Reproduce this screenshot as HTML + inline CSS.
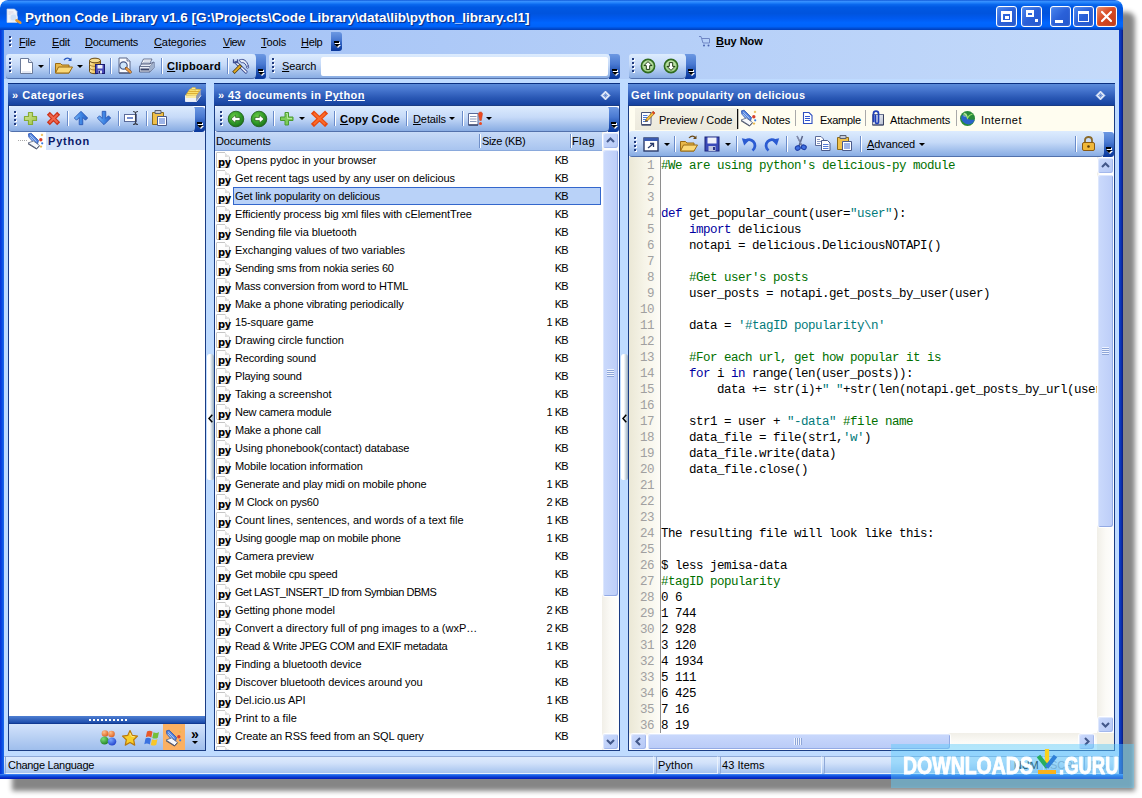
<!DOCTYPE html>
<html lang="en"><head><meta charset="utf-8"><title>Python Code Library v1.6</title>
<style>
html,body{margin:0;padding:0;background:#fff}
body{width:1142px;height:798px;position:relative;overflow:hidden;font:11px "Liberation Sans",sans-serif;letter-spacing:-0.1px;color:#000}
div,span{box-sizing:border-box}
.a{position:absolute}
u{text-decoration:underline;text-underline-offset:1px}
#win{position:absolute;left:0;top:0;width:1123px;height:779px;background:#bfdbff;border-radius:8px 8px 0 0;box-shadow:12px 12px 5px 0 rgba(0,0,0,.48);overflow:hidden}
#title{position:absolute;left:0;top:0;width:1123px;height:30px;border-radius:8px 8px 0 0;
 background:linear-gradient(#0950d2 0%,#3b92ff 4%,#2383fb 9%,#0a68ee 15%,#0058e2 24%,#0054de 45%,#005af0 62%,#0066ff 76%,#0063fa 88%,#0050d8 94%,#003db8 100%)}
#title .tt{position:absolute;left:25px;top:10px;font:bold 13.5px "Liberation Sans",sans-serif;letter-spacing:0;color:#fff;text-shadow:1px 1px 1px #0a2a80;white-space:nowrap}
.cb{position:absolute;top:6px;width:21px;height:21px;border:1px solid #fff;border-radius:3px;background:linear-gradient(135deg,#4a86ee 0%,#2a60d8 50%,#2458cc 100%);box-shadow:inset 0 0 2px rgba(255,255,255,.3)}
.cb.x{background:linear-gradient(135deg,#e88a6a 0%,#d84a22 45%,#c03a18 100%)}
#lb,#rb,#bb{position:absolute;background:#0a48d8}
#lb{left:0;top:30px;width:4px;height:749px;background:linear-gradient(90deg,#0831d9,#0a4ce0 50%,#1a6af0)}
#rb{left:1119px;top:30px;width:4px;height:749px;background:linear-gradient(90deg,#0a3cc8,#0a34b8 50%,#081a80)}
#bb{left:0;top:774px;width:1123px;height:5px;background:linear-gradient(#4a90f8 0,#1a60e8 25%,#0a3cd0 60%,#0019b8 100%)}
#menubar{position:absolute;left:4px;top:30px;width:1115px;height:49px;background:linear-gradient(90deg,#9ebef5,#c4dafa)}
.mi{position:absolute;top:36px;white-space:nowrap;letter-spacing:-.3px}
.grip{position:absolute;width:3px;background:repeating-linear-gradient(#223c80 0,#223c80 2px,transparent 2px,transparent 4px) 0 0/2px 100% no-repeat,repeating-linear-gradient(#fff 0,#fff 2px,transparent 2px,transparent 4px) 1px 1px/2px 100% no-repeat}
.tb{position:absolute;height:25px;border-radius:3px 4px 4px 3px;z-index:0}
.tb:before{content:"";position:absolute;left:0;top:0;right:10px;bottom:0;border-radius:3px 4px 4px 3px;background:linear-gradient(#ddecfe 0%,#c6daf8 45%,#88ace3 100%);border-bottom:1px solid #5271ac;z-index:1}
.cap{position:absolute;top:0;right:0;width:11px;height:100%;border-radius:0 3px 3px 0;background:linear-gradient(#6c98e2 0%,#4a7ad2 40%,#1c4eb0 75%,#08369a 100%)}
.cap:before{content:"";position:absolute;left:3px;bottom:8px;width:5px;height:2px;background:#000;box-shadow:1px 1px 0 #fff}
.cap:after{content:"";position:absolute;left:3px;bottom:4px;border:3px solid transparent;border-top:3px solid #000;border-bottom:0;width:0;height:0;filter:drop-shadow(1px 1px 0 #fff)}
.sep{position:absolute;width:2px;background:linear-gradient(90deg,#6a8ccb 0,#6a8ccb 1px,#fff 1px,#fff 2px)}
.dd{position:absolute;width:0;height:0;border:3px solid transparent;border-top:3px solid #000;border-bottom:0}
.ph{position:absolute;height:23px;border-top:1px solid #0a2f80;border-bottom:1px solid #0a2f80;background:linear-gradient(#5b8bd9 0%,#4574cd 30%,#2a58b5 65%,#15429f 100%);color:#fff;font:bold 11px "Liberation Sans",sans-serif;letter-spacing:.38px;white-space:nowrap}
.ph span.t{position:absolute;left:3px;top:5px}
.ph u{text-underline-offset:1px}
.pane{position:absolute;background:#fff;border:1px solid #1a3c84}
.row{position:absolute;left:0;width:387px;height:18px;line-height:18px;white-space:nowrap}
.row .py{position:absolute;left:1px;top:1px;width:14px;height:16px;padding-left:1px;font:bold 11px "DejaVu Sans Condensed","Liberation Sans",sans-serif;letter-spacing:-.4px;line-height:19px;text-indent:0;color:#000;background:linear-gradient(135deg,#fff 0,#fdfdfd 60%,#e8e8e8 100%);border:1px solid #c6c6c6;border-radius:1px;overflow:visible;white-space:nowrap}
.row .py:before{content:"";position:absolute;right:-1px;top:-1px;width:5px;height:5px;background:linear-gradient(45deg,#d8d8d8 0,#e8e8e8 50%,#fff 50%,#fff 100%)}
.row .t{position:absolute;left:20px;top:0}
.row .kb{position:absolute;right:34px;top:0;letter-spacing:-.7px;word-spacing:.5px}
.row.sel .t{left:18px;width:368px;padding-left:1px;height:18px;line-height:16px;background:#b9d2f8;border:1px solid #3467cc}
.row.sel .kb{z-index:2}
.hd{position:absolute;top:0;height:19px;line-height:18px;padding-left:3px;background:linear-gradient(#c8dbf8,#a8c4ef);border-bottom:1px solid #8aa9dc}
.hd:after{content:"";position:absolute;right:0;top:2px;width:2px;height:14px;background:linear-gradient(90deg,#6f8fc8 0,#6f8fc8 1px,#fff 1px,#fff 2px)}
.hd.nf:after{display:none}
.sbv{position:absolute;width:17px;background:linear-gradient(90deg,#f1efe8,#fbfaf6 50%,#fefefd)}
.sbtn{position:absolute;left:0;width:17px;height:17px;border:1px solid #fff;border-radius:3px;background:linear-gradient(135deg,#cbdafc,#b6c9f6);box-shadow:inset -1px -1px 0 #a3b8ec,inset 1px 1px 0 #dfe8fd}
.thumb{position:absolute;border:1px solid #fff;border-radius:3px;background:linear-gradient(90deg,#cbdafc,#bccdf8);box-shadow:inset -1px -1px 0 #93aae4,inset 1px 1px 0 #dde7fd}
.code,.ln{font:12.5px "Liberation Mono",monospace;letter-spacing:-.5px;white-space:pre}
.code div,.ln div{height:16px;line-height:16px}
.ln{color:#a0a0a0;text-align:right}
.c{color:#007000}.k{color:#0000a0}.s{color:#007a7a}
.tab{position:absolute;top:0;height:24px;line-height:24px;white-space:nowrap}
.sp{position:absolute;top:756px;height:18px;border:1px solid #8fa9d8;border-right-color:#eaf2fd;border-bottom-color:#eaf2fd;line-height:16px;padding-left:3px;white-space:nowrap;letter-spacing:-.2px}
.wm{font:bold 24px "Liberation Sans",sans-serif;letter-spacing:0;color:#fff;-webkit-text-stroke:.9px #fff;transform-origin:0 0;white-space:nowrap;line-height:24px}
</style></head>
<body>
<div id="win">
<div id="title">
 <svg class="a" style="left:5px;top:7px" width="18" height="18" viewBox="0 0 18 18"><path d="M2 2h7.500l2.500 2.500v11h-10z" fill="#f2f5fb" stroke="#c4cde2" stroke-width=".7"/><path d="M3.500 5h5M3.500 7h6" stroke="#d6c8d8" stroke-width=".8"/><circle cx="8.500" cy="10.500" r="3.600" fill="#cfe0f6" stroke="#e9eef8" stroke-width="1.300"/><path d="M11.500 13.300l3.800 2.400" stroke="#e89a32" stroke-width="2.600" stroke-linecap="round"/></svg>
 <span class="tt">Python Code Library v1.6 [G:\Projects\Code Library\data\lib\python_library.cl1]</span>
 <div class="cb" style="left:996px"><div class="a" style="left:4px;top:4px;width:11px;height:11px;border:2px solid #fff;border-top-width:3px"></div><div class="a" style="left:8px;top:9px;width:4px;height:3px;background:#fff"></div></div>
 <div class="cb" style="left:1021px"><div class="a" style="left:4px;top:3px;width:8px;height:7px;border:2px solid #fff;border-top-width:3px"></div><div class="a" style="left:13px;top:12px;width:3px;height:3px;background:#fff"></div></div>
 <div class="cb" style="left:1050px"><div class="a" style="left:4px;top:13px;width:8px;height:3px;background:#fff"></div></div>
 <div class="cb" style="left:1073px"><div class="a" style="left:4px;top:4px;width:11px;height:11px;border:1px solid #fff;border-top-width:3px"></div></div>
 <div class="cb x" style="left:1096px"><svg class="a" style="left:3px;top:3px" width="13" height="13" viewBox="0 0 13 13"><path d="M2 2l9 9M11 2l-9 9" stroke="#fff" stroke-width="2.2" stroke-linecap="round"/></svg></div>
</div>
<div id="lb"></div><div id="rb"></div><div id="bb"></div>
<div id="menubar"></div>
<div class="grip" style="left:9px;top:36px;height:11px"></div>
<span class="mi" style="left:19px"><u>F</u>ile</span>
<span class="mi" style="left:52px"><u>E</u>dit</span>
<span class="mi" style="left:85px"><u>D</u>ocuments</span>
<span class="mi" style="left:154px;letter-spacing:-.1px"><u>C</u>ategories</span>
<span class="mi" style="left:223px;letter-spacing:-.5px"><u>V</u>iew</span>
<span class="mi" style="left:261px;letter-spacing:-.1px"><u>T</u>ools</span>
<span class="mi" style="left:301px"><u>H</u>elp</span>
<div class="a" style="left:331px;top:32px;width:11px;height:19px"><div class="cap"></div></div>
<svg class="a" style="left:698px;top:35px" width="14" height="13" viewBox="0 0 14 13"><path d="M1 1.5h2l2 6.500h6.500v-4.500h-7.500" fill="none" stroke="#6f86c4" stroke-width="1"/><circle cx="6" cy="10.5" r="1" fill="#4a64b0"/><circle cx="10.5" cy="10.5" r="1" fill="#4a64b0"/></svg>
<span class="mi" style="left:716px;top:35px;font-weight:bold;letter-spacing:-.05px"><u>B</u>uy Now</span>

<!-- toolbar row -->
<div class="tb" style="left:6px;top:54px;width:260px"><div class="cap"></div></div>
<div class="grip" style="left:9px;top:58px;height:15px"></div>
<svg class="a" style="left:19px;top:57px" width="16" height="18" viewBox="0 0 16 18"><path d="M1.5 1.5h8l4 4v11h-12z" fill="#fff" stroke="#6b7a99"/><path d="M9.5 1.5v4h4" fill="#dfe6f3" stroke="#6b7a99"/><path d="M3 14h9v2H3z" fill="#e4e9f4"/></svg>
<div class="dd" style="left:38px;top:65px"></div>
<div class="sep" style="left:49px;top:58px;height:16px"></div>
<svg class="a" style="left:54px;top:56px" width="20" height="19" viewBox="0 0 20 19"><path d="M1.5 7.5h5l1.5 1.5h7v8h-13.500z" fill="#e8b84a" stroke="#9a6a12"/><path d="M1.5 17l3-6h14l-3.500 6z" fill="#fbd978" stroke="#9a6a12"/><path d="M10 4c2-2.500 5-2.500 6.500 0" fill="none" stroke="#2a5ac0" stroke-width="1.400"/><path d="M17.500 1.500v3.500h-3.500z" fill="#2a5ac0"/></svg>
<div class="dd" style="left:77px;top:65px"></div>
<svg class="a" style="left:88px;top:57px" width="18" height="18" viewBox="0 0 18 18"><defs><linearGradient id="dbg" x1="0" y1="0" x2="1" y2="0"><stop offset="0" stop-color="#fbe7a8"/><stop offset=".5" stop-color="#eec25a"/><stop offset="1" stop-color="#b8862a"/></linearGradient></defs><path d="M1.500 3.500v11c0 1.300 2.500 2.200 5.500 2.200s5.500-.9 5.500-2.200v-11" fill="url(#dbg)" stroke="#6a4a12" stroke-width="1"/><ellipse cx="7" cy="3.500" rx="5.500" ry="2.300" fill="#f7dc8c" stroke="#6a4a12" stroke-width="1"/><path d="M1.500 7.200c0 1.300 2.500 2.200 5.500 2.200M1.500 10.800c0 1.300 2.500 2.200 5.500 2.200" fill="none" stroke="#9a7020" stroke-width=".8"/><rect x="7.500" y="7.500" width="9" height="9" fill="#4a4ab8" stroke="#1c1c70"/><rect x="9.500" y="8" width="5" height="3.500" fill="#eef0fa"/><rect x="10" y="13.500" width="4" height="3" fill="#e0e4f4"/><rect x="10.500" y="14" width="1.500" height="2.500" fill="#1c1c70"/></svg>
<div class="sep" style="left:110px;top:58px;height:16px"></div>
<svg class="a" style="left:117px;top:56px" width="18" height="19" viewBox="0 0 18 19"><path d="M2 2h8l3 3v12h-11z" fill="#fbfcff" stroke="#5a6688" stroke-width="1"/><path d="M10 2v3h3" fill="#d8deec" stroke="#5a6688" stroke-width=".8"/><path d="M2 16.500h11v1h-11z" fill="#3a4468"/><circle cx="6.500" cy="9.500" r="3.700" fill="#cfe6fb" stroke="#4a5a88" stroke-width="1.200"/><path d="M9.300 12.300l4 3.700" stroke="#7a4a1a" stroke-width="3" stroke-linecap="round"/><path d="M9.500 12.500l3.800 3.500" stroke="#f0a04a" stroke-width="1.700" stroke-linecap="round"/></svg>
<svg class="a" style="left:138px;top:57px" width="18" height="18" viewBox="0 0 18 18"><path d="M5.500 2h8.500l-2.500 5h-8.500z" fill="#fff" stroke="#5a6688" stroke-width=".9" stroke-linejoin="round"/><path d="M6 4h6.500M5 5.500h6.500" stroke="#aab4cc" stroke-width=".8"/><path d="M1.500 9.500l2-2.500h8l4.500-2v5.500l-4 4.500h-10.500z" fill="#e9edf6" stroke="#4a5678" stroke-width=".9" stroke-linejoin="round"/><path d="M1.500 9.500h10.500l4-4.500M12 9.500v5.500" fill="none" stroke="#4a5678" stroke-width=".8"/><path d="M2.500 11.500h8.500v2h-8.500z" fill="#3a4468"/><path d="M12 9.500l4-4.500v5.500l-4 4.500z" fill="#9fb0cc"/></svg>
<div class="sep" style="left:161px;top:58px;height:16px"></div>
<span class="a" style="left:167px;top:60px;font-weight:bold;letter-spacing:.3px"><u>C</u>lipboard</span>
<div class="sep" style="left:227px;top:58px;height:16px"></div>
<svg class="a" style="left:231px;top:56px" width="20" height="19" viewBox="0 0 20 19"><path d="M5 6.500l10 9.500" stroke="#3f4f92" stroke-width="3.200" stroke-linecap="round"/><path d="M5 6.500l10 9.500" stroke="#f4f7fd" stroke-width="1.500" stroke-linecap="round"/><path d="M2.500 3.200v3.300h4v-3.300" fill="none" stroke="#3f4f92" stroke-width="1.300"/><path d="M3.600 15.600l5.200-5.200" stroke="#4a3a12" stroke-width="3.400" stroke-linecap="square"/><path d="M3.600 15.600l5.200-5.200" stroke="#e2aa22" stroke-width="2" stroke-linecap="square"/><path d="M8 4.200c3.500-1.800 7-.6 8.800 4.200l.8 1.800-1.600.8-1-1.600c-1-2.200-2.600-3.200-4.600-2.600z" fill="#e6ebf7" stroke="#3f4f92" stroke-width="1" stroke-linejoin="round"/><circle cx="16.600" cy="11.200" r="1.100" fill="#dfe6f5" stroke="#3f4f92" stroke-width=".9"/></svg>

<div class="tb" style="left:269px;top:54px;width:351px"><div class="cap"></div></div>
<div class="grip" style="left:272px;top:58px;height:15px"></div>
<span class="a" style="left:282px;top:60px"><u>S</u>earch</span>
<div class="a" style="left:321px;top:57px;width:287px;height:19px;background:#fff;border-radius:2px"></div>

<div class="tb" style="left:629px;top:54px;width:67px"><div class="cap"></div></div>
<div class="grip" style="left:632px;top:58px;height:15px"></div>
<svg class="a" style="left:640px;top:58px" width="16" height="16" viewBox="0 0 16 16"><circle cx="8" cy="8" r="6.600" fill="#a4d48a" stroke="#2f6a1e" stroke-width="1.600"/><circle cx="8" cy="7.200" r="4.600" fill="#c4e6b0" opacity=".7"/><path d="M8 3.600l4 4h-2.300v3.800h-3.400v-3.800h-2.300z" fill="#fff" stroke="#1c3a10" stroke-width="1" stroke-linejoin="round"/></svg>
<svg class="a" style="left:663px;top:58px" width="16" height="16" viewBox="0 0 16 16"><circle cx="8" cy="8" r="6.600" fill="#a4d48a" stroke="#2f6a1e" stroke-width="1.600"/><circle cx="8" cy="7.200" r="4.600" fill="#c4e6b0" opacity=".7"/><path d="M8 12.400l4-4h-2.300v-3.800h-3.400v3.800h-2.300z" fill="#fff" stroke="#1c3a10" stroke-width="1" stroke-linejoin="round"/></svg>

<!-- LEFT PANEL -->
<div class="ph" style="left:8px;top:83px;width:198px"><span class="t" style="left:4px;letter-spacing:.52px">» Categories</span>
 <svg class="a" style="left:176px;top:2px" width="18" height="18" viewBox="0 0 18 18"><path d="M1.500 9.500l4.500-6.500 11 .5-4.500 6.500z" fill="#f9df6e" stroke="#d8b23a" stroke-width=".7"/><path d="M3 7.500h11M4.500 5.500h11" stroke="#d9a92e" stroke-width=".9"/><path d="M7 3l1.200-1.500h3l.5 1.600M11 4.800l1-1.300h2.500l.4 1.300" fill="#fbe88e" stroke="#d8b23a" stroke-width=".6"/><path d="M1.500 9.500h11v3h-11z" fill="#fbe9a0"/><path d="M1.500 12h11v3.500h-11z" fill="#eef1f7"/><path d="M12.500 9.500l4.500-6v6l-4.500 6z" fill="#8e98b4"/><path d="M1.500 9.500v6h11M12.500 15.500l4.500-6" fill="none" stroke="#fff" stroke-width=".8"/></svg></div>
<div class="pane" style="left:8px;top:105px;width:198px;height:646px"></div>
<div class="tb" style="left:9px;top:106px;width:196px;height:26px;border-radius:0 4px 4px 0"><div class="cap" style="top:1px;height:25px"></div></div>
<div class="grip" style="left:14px;top:111px;height:15px"></div>
<svg class="a" style="left:23px;top:111px" width="15" height="15" viewBox="0 0 15 15"><defs><linearGradient id="pg" x1="0" y1="0" x2="1" y2="1"><stop offset="0" stop-color="#d6e89a"/><stop offset="1" stop-color="#9cc242"/></linearGradient></defs><path d="M5.500 1.500h4v4h4v4h-4v4h-4v-4h-4v-4h4z" fill="url(#pg)" stroke="#86ac34" stroke-width="1.200" stroke-linejoin="round"/></svg>
<svg class="a" style="left:46px;top:111px" width="15" height="15" viewBox="0 0 15 15"><path d="M3.800 3.800l7.400 7.400M11.200 3.800l-7.400 7.400" stroke="#cc341c" stroke-width="4.200" stroke-linecap="square"/><path d="M4 4l7 7M11 4l-7 7" stroke="#f0664c" stroke-width="1.900" stroke-linecap="square"/></svg>
<div class="sep" style="left:67px;top:111px;height:15px"></div>
<svg class="a" style="left:73px;top:110px" width="16" height="16" viewBox="0 0 18 18"><defs><linearGradient id="ag" x1="0" y1="0" x2="1" y2="0"><stop offset="0" stop-color="#7ab8f8"/><stop offset=".5" stop-color="#3f86e4"/><stop offset="1" stop-color="#2a62c4"/></linearGradient></defs><path d="M9 1.500l7.500 7.500-2.500 2.500-3-3v8h-4v-8l-3 3-2.500-2.500z" fill="url(#ag)" stroke="#2a58b4" stroke-width="1" stroke-linejoin="round"/></svg>
<svg class="a" style="left:96px;top:110px" width="16" height="16" viewBox="0 0 18 18"><path d="M9 16.500l7.500-7.500-2.500-2.500-3 3v-8h-4v8l-3-3-2.500 2.500z" fill="url(#ag)" stroke="#2a58b4" stroke-width="1" stroke-linejoin="round"/></svg>
<div class="sep" style="left:118px;top:111px;height:15px"></div>
<svg class="a" style="left:123px;top:110px" width="18" height="16" viewBox="0 0 18 16"><rect x="1.500" y="4.500" width="12" height="7" fill="#fff" stroke="#5a6a9a"/><path d="M4 8h6" stroke="#4a6ac0" stroke-width="1.400"/><path d="M10 1.500c1.500 0 2.500.8 2.500 2v9c0 1.200-1 2-2.500 2M15 1.500c-1.500 0-2.500.8-2.500 2M15 14.500c-1.500 0-2.500-.8-2.500-2" fill="none" stroke="#3a3f4c" stroke-width="1.100"/></svg>
<div class="sep" style="left:146px;top:111px;height:15px"></div>
<svg class="a" style="left:151px;top:109px" width="18" height="18" viewBox="0 0 18 18"><path d="M1.500 3.500h11v12h-11z" fill="#f0c04a" stroke="#8a6a1a"/><path d="M4 1.500h6v3h-6z" fill="#c8ccd8" stroke="#5a6070"/><path d="M6.500 7.500h9v9h-9z" fill="#fff" stroke="#4a5a8a"/><path d="M8 10h6M8 12h6M8 14h6" stroke="#3f6ad0" stroke-width="1"/></svg>
<!-- tree -->
<div class="a" style="left:9px;top:132px;width:196px;height:584px;background:#fff"></div>
<div class="a" style="left:18px;top:140px;width:10px;height:1px;background:repeating-linear-gradient(90deg,#aaa 0,#aaa 1px,transparent 1px,transparent 2px)"></div>
<div class="a" style="left:46px;top:132px;width:159px;height:18px;background:#d6e4fb"></div>
<svg class="a" style="left:27px;top:132px" width="18" height="18" viewBox="0 0 18 18"><path d="M1.500 1.800l2.700-.6 7.300 7.300-1 3.500h-2.500l-6.200-7z" fill="#4f7fdc" stroke="#2a52b0" stroke-width=".8" stroke-linejoin="round"/><path d="M3.200 3l6.300 6.300M2.600 4.800l5.400 5.600" stroke="#bcd6f7" stroke-width="1"/><path d="M1 11l5.500-2 6 4.500-3 3z" fill="#f6f8fc" stroke="#5a6680" stroke-width=".8" stroke-linejoin="round"/><path d="M1 11.300l8.500 5.300 3-3v1l-3 3-8.500-5.300z" fill="#474f66"/><path d="M15 1.500l1.400 1.400-1.400 1.400-1.400-1.400z" fill="#eab94c"/><circle cx="13.800" cy="7.800" r="1.700" fill="#d8402a"/><circle cx="15.200" cy="11.300" r="1.100" fill="#3a7ae0"/><path d="M14 13.200l1.400 1.400-1.400 1.400-1.400-1.400z" fill="#eab94c"/></svg>
<span class="a" style="left:48px;top:135px;font-weight:bold;color:#0a1a6a;letter-spacing:.8px">Python</span>
<!-- bottom of left panel -->
<div class="a" style="left:9px;top:716px;width:196px;height:8px;background:linear-gradient(#4f7fd2,#1f4fae 80%,#0a2f86)"></div>
<div class="a" style="left:89px;top:719px;width:38px;height:2px;background:repeating-linear-gradient(90deg,#fff 0,#fff 2px,transparent 2px,transparent 4px)"></div>
<div class="a" style="left:9px;top:724px;width:196px;height:26px;background:linear-gradient(#d3e3fb,#9fbeec)"></div>
<div class="a" style="left:163px;top:724px;width:22px;height:26px;background:#fbb062"></div>
<svg class="a" style="left:99px;top:729px" width="19" height="18" viewBox="0 0 19 18"><defs><radialGradient id="p1" cx=".35" cy=".3" r=".8"><stop offset="0" stop-color="#ffc08a"/><stop offset="1" stop-color="#d85a1a"/></radialGradient><radialGradient id="p2" cx=".35" cy=".3" r=".8"><stop offset="0" stop-color="#7ae07a"/><stop offset="1" stop-color="#1a7a1a"/></radialGradient><radialGradient id="p3" cx=".35" cy=".3" r=".8"><stop offset="0" stop-color="#7aa8ff"/><stop offset="1" stop-color="#1a3ac8"/></radialGradient></defs><circle cx="6" cy="4.500" r="3.300" fill="url(#p1)"/><circle cx="12.500" cy="5" r="3.300" fill="url(#p1)"/><ellipse cx="5.500" cy="11.500" rx="4.300" ry="4" fill="url(#p2)"/><ellipse cx="13" cy="12.500" rx="4.300" ry="4" fill="url(#p3)"/></svg>
<svg class="a" style="left:121px;top:729px" width="18" height="18" viewBox="0 0 18 18"><path d="M9 1.500l2.300 4.900 5.200.7-3.800 3.700 1 5.300-4.700-2.600-4.700 2.600 1-5.300-3.800-3.700 5.200-.7z" fill="#f8cf2a" stroke="#b8780e" stroke-width="1.200" stroke-linejoin="round"/><path d="M9 4l1.500 3.300 3.200.4" fill="none" stroke="#fdea8a" stroke-width="1"/></svg>
<svg class="a" style="left:144px;top:729px" width="18" height="18" viewBox="0 0 18 18"><path d="M3 2.500c2-1.300 4-.8 5.500.3l-1.200 5.700c-1.600-1-3.500-1.500-5.500-.2z" fill="#e8592a"/><path d="M9.500 3.200c2 1 4 .9 5.500-.2l-1.200 5.700c-1.500 1-3.500 1.200-5.500.2z" fill="#74bf3a"/><path d="M1.500 9.500c2-1.300 4-.8 5.500.3l-1.200 5.700c-1.600-1-3.500-1.500-5.500-.2z" fill="#3a72e0"/><path d="M8 10.200c2 1 4 .9 5.500-.2l-1.200 5.700c-1.500 1-3.500 1.200-5.500.2z" fill="#f8c62a"/></svg>
<svg class="a" style="left:165px;top:729px" width="18" height="18" viewBox="0 0 18 18"><path d="M1.500 1.800l2.700-.6 7.300 7.300-1 3.500h-2.500l-6.200-7z" fill="#4f7fdc" stroke="#2a52b0" stroke-width=".8" stroke-linejoin="round"/><path d="M3.200 3l6.300 6.300M2.600 4.800l5.400 5.600" stroke="#bcd6f7" stroke-width="1"/><path d="M1 11l5.500-2 6 4.500-3 3z" fill="#f6f8fc" stroke="#5a6680" stroke-width=".8" stroke-linejoin="round"/><path d="M1 11.300l8.500 5.300 3-3v1l-3 3-8.500-5.300z" fill="#474f66"/><path d="M15 1.500l1.400 1.400-1.400 1.400-1.400-1.400z" fill="#eab94c"/><circle cx="13.800" cy="7.800" r="1.700" fill="#d8402a"/><circle cx="15.200" cy="11.300" r="1.100" fill="#3a7ae0"/><path d="M14 13.200l1.400 1.400-1.400 1.400-1.400-1.400z" fill="#eab94c"/></svg>
<span class="a" style="left:191px;top:726px;font:bold 14px 'Liberation Sans',sans-serif;letter-spacing:0">»</span>
<div class="dd" style="left:192px;top:741px"></div>

<!-- splitter 1 -->
<div class="a" style="left:207px;top:354px;width:7px;height:126px;border-radius:3px 3px 2px 2px;background:linear-gradient(90deg,#fff 0,#fff 40%,#c9d6e2 70%,#98acbc 100%)"></div>
<svg class="a" style="left:208px;top:414px" width="5" height="9" viewBox="0 0 5 9"><path d="M4.300 .7l-3.300 3.800 3.300 3.800" fill="none" stroke="#000" stroke-width="1.500"/></svg>

<!-- MIDDLE PANEL -->
<div class="ph" style="left:214px;top:83px;width:406px"><span class="t" style="left:4px;letter-spacing:.44px">» <u>43</u> documents in <u>Python</u></span>
 <svg class="a" style="left:386px;top:6px" width="11" height="11" viewBox="0 0 11 11"><path d="M5.500 1l4.500 4.500-4.500 4.500-4.500-4.500z" fill="#dfe8fa" stroke="#fff" stroke-width=".6"/><path d="M3 5.500h5M5.500 3v5M4 4l3 3M7 4l-3 3" stroke="#4a74c8" stroke-width=".6"/></svg></div>
<div class="pane" style="left:214px;top:105px;width:406px;height:646px"></div>
<div class="tb" style="left:215px;top:106px;width:404px;height:26px;border-radius:0 4px 4px 0"><div class="cap" style="top:1px;height:25px"></div></div>
<div class="grip" style="left:220px;top:111px;height:15px"></div>
<svg class="a" style="left:227px;top:110px" width="18" height="18" viewBox="0 0 18 18"><defs><radialGradient id="gg" cx=".4" cy=".35" r=".7"><stop offset="0" stop-color="#6fd04a"/><stop offset=".6" stop-color="#2f9a26"/><stop offset="1" stop-color="#1a6a18"/></radialGradient></defs><circle cx="9" cy="9" r="7.800" fill="url(#gg)" stroke="#1d5a16" stroke-width=".8"/><path d="M4 9l4.600-4v2.400h4.400v3.200h-4.400v2.400z" fill="#fff" stroke="#1f5a14" stroke-width=".7" stroke-linejoin="round"/></svg>
<svg class="a" style="left:250px;top:110px" width="18" height="18" viewBox="0 0 18 18"><circle cx="9" cy="9" r="7.800" fill="url(#gg)" stroke="#1d5a16" stroke-width=".8"/><path d="M14 9l-4.600-4v2.400h-4.400v3.200h4.400v2.400z" fill="#fff" stroke="#1f5a14" stroke-width=".7" stroke-linejoin="round"/></svg>
<div class="sep" style="left:273px;top:111px;height:15px"></div>
<svg class="a" style="left:279px;top:111px" width="16" height="16" viewBox="0 0 16 16"><path d="M6 1.500h3.500v4.500h4.500v3.500h-4.500v4.500h-3.500v-4.500h-4.500v-3.500h4.500z" fill="#7ccc58" stroke="#4a9a32" stroke-width="1" stroke-linejoin="round"/><path d="M7 2.500h1.500v5h4.500" fill="none" stroke="#b4e89a" stroke-width="1"/></svg>
<div class="dd" style="left:299px;top:117px"></div>
<svg class="a" style="left:311px;top:110px" width="17" height="17" viewBox="0 0 17 17"><path d="M3 3.500l11 10.500M14 3.500l-11 10.500" stroke="#e8480e" stroke-width="4.400" stroke-linecap="square"/><path d="M3.500 4l10 9.500M13.500 4l-10 9.500" stroke="#fb6a2a" stroke-width="2" stroke-linecap="square"/></svg>
<div class="sep" style="left:334px;top:111px;height:15px"></div>
<span class="a" style="left:340px;top:113px;font-weight:bold;letter-spacing:.2px"><u>C</u>opy Code</span>
<div class="sep" style="left:406px;top:111px;height:15px"></div>
<span class="a" style="left:413px;top:113px"><u>D</u>etails</span>
<div class="dd" style="left:449px;top:117px"></div>
<div class="sep" style="left:462px;top:111px;height:15px"></div>
<svg class="a" style="left:467px;top:111px" width="18" height="16" viewBox="0 0 18 16"><path d="M1.500 2.500h9.500v11.500h-9.500z" fill="#fff" stroke="#5a6a9a"/><path d="M1.500 14h9.500" stroke="#2a3458" stroke-width="1.200"/><path d="M3 5.500h6.500M3 8h6.500M3 10.500h6.500" stroke="#8a9abc" stroke-width="1"/><path d="M13.500 1c1.700 0 2.300 1.200 1.800 3.200l-1 5.300h-1.600l-1-5.300c-.5-2 .1-3.200 1.800-3.200z" fill="#ea4a22" stroke="#c83a18" stroke-width=".5"/><circle cx="13.500" cy="12.500" r="1.500" fill="#ea4a22"/></svg>
<div class="dd" style="left:486px;top:117px"></div>
<!-- list -->
<div class="a" style="left:215px;top:132px;width:404px;height:618px;overflow:hidden;background:#fff">
 <div class="hd" style="left:0;width:266px;padding-left:1px">Documents</div>
 <div class="hd" style="left:266px;width:91px;padding-left:1px;letter-spacing:-.35px">Size (KB)</div>
 <div class="hd nf" style="left:357px;width:30px;padding-left:0;letter-spacing:.4px">Flag</div>
<div class="row" style="top:19px"><span class="py">py</span><span class="t" style="letter-spacing:-0.061px">Opens pydoc in your browser</span><span class="kb">KB</span></div>
<div class="row" style="top:37px"><span class="py">py</span><span class="t" style="letter-spacing:-0.070px">Get recent tags used by any user on delicious</span><span class="kb">KB</span></div>
<div class="row sel" style="top:55px"><span class="py">py</span><span class="t" style="letter-spacing:-0.139px">Get link popularity on delicious</span><span class="kb">KB</span></div>
<div class="row" style="top:73px"><span class="py">py</span><span class="t" style="letter-spacing:-0.118px">Efficiently process big xml files with cElementTree</span><span class="kb">KB</span></div>
<div class="row" style="top:91px"><span class="py">py</span><span class="t" style="letter-spacing:-0.053px">Sending file via bluetooth</span><span class="kb">KB</span></div>
<div class="row" style="top:109px"><span class="py">py</span><span class="t" style="letter-spacing:-0.055px">Exchanging values of two variables</span><span class="kb">KB</span></div>
<div class="row" style="top:127px"><span class="py">py</span><span class="t" style="letter-spacing:-0.216px">Sending sms from nokia series 60</span><span class="kb">KB</span></div>
<div class="row" style="top:145px"><span class="py">py</span><span class="t" style="letter-spacing:-0.197px">Mass conversion from word to HTML</span><span class="kb">KB</span></div>
<div class="row" style="top:163px"><span class="py">py</span><span class="t" style="letter-spacing:-0.107px">Make a phone vibrating periodically</span><span class="kb">KB</span></div>
<div class="row" style="top:181px"><span class="py">py</span><span class="t" style="letter-spacing:-0.108px">15-square game</span><span class="kb">1 KB</span></div>
<div class="row" style="top:199px"><span class="py">py</span><span class="t" style="letter-spacing:-0.084px">Drawing circle function</span><span class="kb">KB</span></div>
<div class="row" style="top:217px"><span class="py">py</span><span class="t" style="letter-spacing:-0.155px">Recording sound</span><span class="kb">KB</span></div>
<div class="row" style="top:235px"><span class="py">py</span><span class="t" style="letter-spacing:-0.184px">Playing sound</span><span class="kb">KB</span></div>
<div class="row" style="top:253px"><span class="py">py</span><span class="t" style="letter-spacing:-0.075px">Taking a screenshot</span><span class="kb">KB</span></div>
<div class="row" style="top:271px"><span class="py">py</span><span class="t" style="letter-spacing:-0.273px">New camera module</span><span class="kb">1 KB</span></div>
<div class="row" style="top:289px"><span class="py">py</span><span class="t" style="letter-spacing:-0.205px">Make a phone call</span><span class="kb">KB</span></div>
<div class="row" style="top:307px"><span class="py">py</span><span class="t" style="letter-spacing:-0.070px">Using phonebook(contact) database</span><span class="kb">KB</span></div>
<div class="row" style="top:325px"><span class="py">py</span><span class="t" style="letter-spacing:-0.118px">Mobile location information</span><span class="kb">KB</span></div>
<div class="row" style="top:343px"><span class="py">py</span><span class="t" style="letter-spacing:-0.177px">Generate and play midi on mobile phone</span><span class="kb">1 KB</span></div>
<div class="row" style="top:361px"><span class="py">py</span><span class="t" style="letter-spacing:-0.242px">M Clock on pys60</span><span class="kb">2 KB</span></div>
<div class="row" style="top:379px"><span class="py">py</span><span class="t" style="letter-spacing:0.024px">Count lines, sentences, and words of a text file</span><span class="kb">1 KB</span></div>
<div class="row" style="top:397px"><span class="py">py</span><span class="t" style="letter-spacing:-0.231px">Using google map on mobile phone</span><span class="kb">1 KB</span></div>
<div class="row" style="top:415px"><span class="py">py</span><span class="t" style="letter-spacing:-0.107px">Camera preview</span><span class="kb">KB</span></div>
<div class="row" style="top:433px"><span class="py">py</span><span class="t" style="letter-spacing:-0.227px">Get mobile cpu speed</span><span class="kb">KB</span></div>
<div class="row" style="top:451px"><span class="py">py</span><span class="t" style="letter-spacing:-0.443px">Get LAST_INSERT_ID from Symbian DBMS</span><span class="kb">KB</span></div>
<div class="row" style="top:469px"><span class="py">py</span><span class="t" style="letter-spacing:-0.124px">Getting phone model</span><span class="kb">2 KB</span></div>
<div class="row" style="top:487px"><span class="py">py</span><span class="t" style="letter-spacing:0.004px">Convert a directory full of png images to a (wxP…</span><span class="kb">2 KB</span></div>
<div class="row" style="top:505px"><span class="py">py</span><span class="t" style="letter-spacing:-0.288px">Read &amp; Write JPEG COM and EXIF metadata</span><span class="kb">1 KB</span></div>
<div class="row" style="top:523px"><span class="py">py</span><span class="t" style="letter-spacing:-0.073px">Finding a bluetooth device</span><span class="kb">KB</span></div>
<div class="row" style="top:541px"><span class="py">py</span><span class="t" style="letter-spacing:-0.052px">Discover bluetooth devices around you</span><span class="kb">KB</span></div>
<div class="row" style="top:559px"><span class="py">py</span><span class="t" style="letter-spacing:-0.023px">Del.icio.us API</span><span class="kb">1 KB</span></div>
<div class="row" style="top:577px"><span class="py">py</span><span class="t" style="letter-spacing:0.047px">Print to a file</span><span class="kb">KB</span></div>
<div class="row" style="top:595px"><span class="py">py</span><span class="t" style="letter-spacing:-0.149px">Create an RSS feed from an SQL query</span><span class="kb">KB</span></div>
<div class="row" style="top:613px"><span class="py">py</span><span class="t">Send an email with attachment</span><span class="kb">1 KB</span></div>
 <div class="sbv" style="left:387px;top:0;height:618px">
  <div class="sbtn" style="top:0"><svg class="a" style="left:3px;top:4px" width="9" height="6" viewBox="0 0 9 6"><path d="M1 5l3.500-3.500 3.500 3.500" fill="none" stroke="#43588a" stroke-width="2.100"/></svg></div>
  <div class="thumb" style="left:0;top:17px;width:17px;height:448px"></div>
  <div class="a" style="left:5px;top:237px;width:7px;height:8px;background:repeating-linear-gradient(#eef3ff 0,#eef3ff 1px,#8ea6d8 1px,#8ea6d8 2px)"></div>
  <div class="sbtn" style="top:601px"><svg class="a" style="left:3px;top:5px" width="9" height="6" viewBox="0 0 9 6"><path d="M1 1l3.500 3.500 3.500-3.500" fill="none" stroke="#43588a" stroke-width="2.100"/></svg></div>
 </div>
</div>

<!-- splitter 2 -->
<div class="a" style="left:621px;top:354px;width:7px;height:126px;border-radius:3px 3px 2px 2px;background:linear-gradient(90deg,#fff 0,#fff 40%,#c9d6e2 70%,#98acbc 100%)"></div>
<svg class="a" style="left:622px;top:414px" width="5" height="9" viewBox="0 0 5 9"><path d="M4.300 .7l-3.300 3.800 3.300 3.800" fill="none" stroke="#000" stroke-width="1.500"/></svg>

<!-- RIGHT PANEL -->
<div class="ph" style="left:628px;top:83px;width:487px"><span class="t" style="letter-spacing:.33px">Get link popularity on delicious</span>
 <svg class="a" style="left:467px;top:6px" width="11" height="11" viewBox="0 0 11 11"><path d="M5.500 1l4.500 4.500-4.500 4.500-4.500-4.500z" fill="#dfe8fa" stroke="#fff" stroke-width=".6"/><path d="M3 5.500h5M5.500 3v5M4 4l3 3M7 4l-3 3" stroke="#4a74c8" stroke-width=".6"/></svg></div>
<div class="pane" style="left:628px;top:105px;width:487px;height:646px"></div>
<div class="a" style="left:629px;top:106px;width:485px;height:25px;background:#fffdf0"></div>
<div class="a" style="left:635px;top:108px;width:103px;height:22px;background:linear-gradient(#f3f1e6,#ece9dc)"></div><div class="a" style="left:737px;top:109px;width:1px;height:20px;background:#111;box-shadow:1px 0 0 rgba(0,0,0,.25)"></div>
<svg class="a" style="left:640px;top:110px" width="16" height="17" viewBox="0 0 16 17"><path d="M1.500 2.500h9.500v12h-9.500z" fill="#fdfdff" stroke="#4a5478" stroke-width="1"/><path d="M1.500 14.500h9.500v1.200h-9.500z" fill="#3a4468"/><path d="M3 5.500h4.500M3 7.500h4M3 9.500h3M3 11.500h5" stroke="#4a7ad8" stroke-width="1"/><path d="M13.200 1.200l1.800 1.800-7 7.500-2.600 1 .9-2.700z" fill="#f2bc3a" stroke="#8a5a1a" stroke-width=".7" stroke-linejoin="round"/><path d="M13.200 1.200l1.800 1.800-1.300 1.400-1.800-1.800z" fill="#e0402a"/><path d="M5.400 11.500l.5-1.500 1 1z" fill="#222"/></svg>
<span class="a" style="left:659px;top:114px">Preview / Code</span>
<svg class="a" style="left:740px;top:109px" width="18" height="18" viewBox="0 0 18 18"><path d="M1.500 1.800l2.700-.6 7.300 7.300-1 3.500h-2.500l-6.200-7z" fill="#4f7fdc" stroke="#2a52b0" stroke-width=".8" stroke-linejoin="round"/><path d="M3.200 3l6.300 6.300M2.600 4.800l5.400 5.600" stroke="#bcd6f7" stroke-width="1"/><path d="M1 11l5.500-2 6 4.500-3 3z" fill="#f6f8fc" stroke="#5a6680" stroke-width=".8" stroke-linejoin="round"/><path d="M1 11.300l8.500 5.300 3-3v1l-3 3-8.500-5.300z" fill="#474f66"/><path d="M15 1.500l1.400 1.400-1.400 1.400-1.400-1.400z" fill="#eab94c"/><circle cx="13.800" cy="7.800" r="1.700" fill="#d8402a"/><circle cx="15.200" cy="11.300" r="1.100" fill="#3a7ae0"/><path d="M14 13.200l1.400 1.400-1.400 1.400-1.400-1.400z" fill="#eab94c"/></svg>
<span class="a" style="left:762px;top:114px">Notes</span>
<div class="a" style="left:795px;top:110px;width:1px;height:16px;background:#a9a9a9"></div>
<svg class="a" style="left:802px;top:111px" width="12" height="14" viewBox="0 0 12 14"><path d="M1.500 1.500h5.500l3 3v8h-8.500z" fill="#fff" stroke="#2f4fc0" stroke-width="1.100"/><path d="M3 5.500h5M3 7.500h5M3 9.500h5" stroke="#2f55d0" stroke-width="1"/></svg>
<span class="a" style="left:820px;top:114px;letter-spacing:-.3px">Example</span>
<div class="a" style="left:865px;top:110px;width:1px;height:16px;background:#a9a9a9"></div>
<svg class="a" style="left:869px;top:109px" width="17" height="18" viewBox="0 0 17 18"><defs><linearGradient id="atg" x1="0" y1="0" x2="1" y2="1"><stop offset="0" stop-color="#fff"/><stop offset="1" stop-color="#b4bcd0"/></linearGradient></defs><path d="M3.500 5.500h11v10.500h-11z" fill="url(#atg)" stroke="#5a6488" stroke-width=".9"/><path d="M3.500 16h11M14.500 5.500v10.500" stroke="#3a4260" stroke-width="1"/><path d="M4.500 12.500v-8c0-3.300 5-3.300 5 0v8.500c0 2-3 2-3 0v-6.500" fill="none" stroke="#1f3fb8" stroke-width="1.700" stroke-linecap="round"/></svg>
<span class="a" style="left:890px;top:114px">Attachments</span>
<div class="a" style="left:956px;top:110px;width:1px;height:16px;background:#a9a9a9"></div>
<svg class="a" style="left:959px;top:110px" width="17" height="17" viewBox="0 0 17 17"><circle cx="8.500" cy="8.500" r="7.500" fill="#2a8a3a"/><path d="M3 5c3 2 5 0 6 3s4 1 6.500 2c-1 4-6 6-10 3-3-2-4-5-2.500-8z" fill="#2a62c8"/><path d="M5 3c2 1 3 3 3.500 5 1-2 3-3.500 5-4" fill="none" stroke="#9ae06a" stroke-width="1.200"/><circle cx="6" cy="5" r="2" fill="#fff" opacity=".35"/></svg>
<span class="a" style="left:981px;top:114px;letter-spacing:.45px">Internet</span>
<!-- editor toolbar -->
<div class="tb" style="left:629px;top:131px;width:485px;height:26px;border-radius:0 4px 4px 0"><div class="cap" style="top:1px;height:25px"></div></div>
<div class="grip" style="left:634px;top:137px;height:15px"></div>
<svg class="a" style="left:643px;top:137px" width="16" height="15" viewBox="0 0 16 15"><rect x="1" y="1" width="14" height="13" fill="#fff" stroke="#2a3a6a" stroke-width="1.400"/><rect x="1" y="1" width="14" height="3" fill="#3a5ab0"/><path d="M5 11l5-4M7 6.500h3.500v3.500" fill="none" stroke="#2a3a6a" stroke-width="1.300"/></svg>
<div class="dd" style="left:664px;top:143px"></div>
<div class="sep" style="left:674px;top:136px;height:16px"></div>
<svg class="a" style="left:679px;top:134px" width="20" height="19" viewBox="0 0 20 19"><path d="M1.500 7.500h5l1.500 1.500h7v8h-13.500z" fill="#e8b84a" stroke="#9a6a12"/><path d="M1.500 17l3-6h14l-3.500 6z" fill="#fbd978" stroke="#9a6a12"/><path d="M10 4c2-2.500 5-2.500 6.500 0" fill="none" stroke="#6a4a1a" stroke-width="1.200"/><path d="M17.500 1.500v3.500h-3.500z" fill="#6a4a1a"/></svg>
<svg class="a" style="left:704px;top:136px" width="16" height="16" viewBox="0 0 16 16"><rect x="1" y="1" width="14" height="14" fill="#3a4ab8" stroke="#1a2478"/><rect x="3.500" y="1.500" width="9" height="6" fill="#f0f2fa"/><rect x="4.500" y="10" width="7" height="5" fill="#c0c6e0"/><rect x="9" y="11" width="2" height="3" fill="#2a3488"/></svg>
<div class="dd" style="left:725px;top:143px"></div>
<div class="sep" style="left:736px;top:136px;height:16px"></div>
<svg class="a" style="left:741px;top:136px" width="17" height="16" viewBox="0 0 17 16"><path d="M11.500 14.500c3-2.500 3.300-6.500.8-9-2.200-2.200-5.400-2.300-7.600-.7" fill="none" stroke="#2b5bd2" stroke-width="2.800"/><path d="M.8 2.200l7.700 1.600-5.300 5.700z" fill="#2b5bd2"/></svg>
<svg class="a" style="left:763px;top:136px" width="17" height="16" viewBox="0 0 17 16"><path d="M5.500 14.500c-3-2.500-3.300-6.500-.8-9 2.200-2.200 5.400-2.300 7.600-.7" fill="none" stroke="#2b5bd2" stroke-width="2.800"/><path d="M16.200 2.200l-7.700 1.600 5.300 5.700z" fill="#2b5bd2"/></svg>
<div class="sep" style="left:786px;top:136px;height:16px"></div>
<svg class="a" style="left:794px;top:135px" width="14" height="17" viewBox="0 0 14 17"><path d="M3 1l5 10M8.500 1l-3.500 10" stroke="#5a6488" stroke-width="1.500"/><path d="M3 1l5 10" stroke="#aab2cc" stroke-width=".6"/><ellipse cx="3.800" cy="13" rx="2.500" ry="2.200" transform="rotate(-25 3.800 13)" fill="#3f6fe0" stroke="#1f3fa8" stroke-width="1.100"/><ellipse cx="9.800" cy="12.200" rx="2.500" ry="2.200" transform="rotate(25 9.800 12.200)" fill="#3f6fe0" stroke="#1f3fa8" stroke-width="1.100"/></svg>
<svg class="a" style="left:814px;top:135px" width="18" height="17" viewBox="0 0 18 17"><path d="M1.500 1.500h5.500l2.500 2.500v6.500h-8z" fill="#fff" stroke="#5a6a9a"/><path d="M3 4.500h3M3 6.500h5M3 8.500h3" stroke="#7a8ab8" stroke-width=".9"/><path d="M7.500 5.500h6l2.500 2.500v7.500h-8.500z" fill="#fff" stroke="#4a5a8a"/><path d="M9 9.500h5.500M9 11.500h5.500M9 13.500h5.500" stroke="#3f6ad0" stroke-width=".9"/></svg>
<svg class="a" style="left:836px;top:134px" width="18" height="18" viewBox="0 0 18 18"><path d="M1.500 3.500h11v12h-11z" fill="#f0c04a" stroke="#8a6a1a"/><path d="M4 1.500h6v3h-6z" fill="#c8ccd8" stroke="#5a6070"/><path d="M6.500 7.500h9v9h-9z" fill="#fff" stroke="#4a5a8a"/><path d="M8 10h6M8 12h6M8 14h6" stroke="#3f6ad0" stroke-width="1"/></svg>
<div class="sep" style="left:860px;top:136px;height:16px"></div>
<span class="a" style="left:867px;top:138px"><u>A</u>dvanced</span>
<div class="dd" style="left:919px;top:143px"></div>
<div class="sep" style="left:1075px;top:136px;height:16px"></div>
<svg class="a" style="left:1081px;top:135px" width="15" height="17" viewBox="0 0 15 17"><path d="M4 8v-3c0-4 7-4 7 0v3" fill="none" stroke="#8a6a2a" stroke-width="1.800"/><rect x="1.500" y="7.500" width="12" height="8" rx="1.500" fill="#f0b83a" stroke="#8a5a12"/><circle cx="7.500" cy="11.500" r="1.300" fill="#5a3a0a"/></svg>
<!-- editor -->
<div class="a" style="left:629px;top:157px;width:485px;height:593px;background:#fff;overflow:hidden">
 <div class="a" style="left:0;top:0;width:32px;height:576px;background:linear-gradient(90deg,#ebe8d6,#f6f4e8 50%,#fdfcf7);border-right:1px solid #8e8e8e"></div>
 <div class="a ln" style="left:0;top:1px;width:25px"><div>1</div><div>2</div><div>3</div><div>4</div><div>5</div><div>6</div><div>7</div><div>8</div><div>9</div><div>10</div><div>11</div><div>12</div><div>13</div><div>14</div><div>15</div><div>16</div><div>17</div><div>18</div><div>19</div><div>20</div><div>21</div><div>22</div><div>23</div><div>24</div><div>25</div><div>26</div><div>27</div><div>28</div><div>29</div><div>30</div><div>31</div><div>32</div><div>33</div><div>34</div><div>35</div><div>36</div><div>37</div></div>
 <div class="a code" style="left:32px;top:1px;width:436px;overflow:hidden"><div><span class="c">#We are using python's delicious-py module</span></div><div>&nbsp;</div><div>&nbsp;</div><div><span class="k">def</span> get_popular_count(user=<span class="s">"user"</span>):</div><div>    <span class="k">import</span> delicious</div><div>    notapi = delicious.DeliciousNOTAPI()</div><div>&nbsp;</div><div>    <span class="c">#Get user's posts</span></div><div>    user_posts = notapi.get_posts_by_user(user)</div><div>&nbsp;</div><div>    data = <span class="s">'#tagID popularity\n'</span></div><div>&nbsp;</div><div>    <span class="c">#For each url, get how popular it is</span></div><div>    <span class="k">for</span> i <span class="k">in</span> range(len(user_posts)):</div><div>        data += str(i)+<span class="s">" "</span>+str(len(notapi.get_posts_by_url(user_posts[i]['url'])))</div><div>&nbsp;</div><div>    str1 = user + <span class="s">"-data"</span> <span class="c">#file name</span></div><div>    data_file = file(str1,<span class="s">'w'</span>)</div><div>    data_file.write(data)</div><div>    data_file.close()</div><div>&nbsp;</div><div>&nbsp;</div><div>&nbsp;</div><div>The resulting file will look like this:</div><div>&nbsp;</div><div>$ less jemisa-data</div><div><span class="c">#tagID popularity</span></div><div>0 6</div><div>1 744</div><div>2 928</div><div>3 120</div><div>4 1934</div><div>5 111</div><div>6 425</div><div>7 16</div><div>8 19</div><div>9 302</div></div>
 
 <!-- vscroll -->
 <div class="sbv" style="left:468px;top:0;height:576px">
  <div class="sbtn" style="top:0"><svg class="a" style="left:3px;top:4px" width="9" height="6" viewBox="0 0 9 6"><path d="M1 5l3.500-3.500 3.500 3.500" fill="none" stroke="#43588a" stroke-width="2.100"/></svg></div>
  <div class="thumb" style="left:0;top:17px;width:17px;height:354px"></div>
  <div class="a" style="left:5px;top:190px;width:7px;height:8px;background:repeating-linear-gradient(#eef3ff 0,#eef3ff 1px,#8ea6d8 1px,#8ea6d8 2px)"></div>
  <div class="sbtn" style="top:559px"><svg class="a" style="left:3px;top:5px" width="9" height="6" viewBox="0 0 9 6"><path d="M1 1l3.500 3.500 3.500-3.500" fill="none" stroke="#43588a" stroke-width="2.100"/></svg></div>
 </div>
 <!-- hscroll -->
 <div class="a" style="left:0;top:576px;width:468px;height:17px;background:linear-gradient(#f1efe8,#fbfaf6 50%,#fefefd)">
  <div class="sbtn" style="left:1px;top:0"><svg class="a" style="left:4px;top:3px" width="6" height="9" viewBox="0 0 6 9"><path d="M5 1l-3.500 3.500 3.500 3.500" fill="none" stroke="#43588a" stroke-width="2.100"/></svg></div>
  <div class="thumb" style="left:18px;top:0;width:304px;height:17px;background:linear-gradient(#c9d8fc,#b9cbf7)"></div>
  <div class="a" style="left:165px;top:5px;width:8px;height:7px;background:repeating-linear-gradient(90deg,#eef3ff 0,#eef3ff 1px,#8ea6d8 1px,#8ea6d8 2px)"></div>
  <div class="sbtn" style="left:449px;top:0"><svg class="a" style="left:5px;top:3px" width="6" height="9" viewBox="0 0 6 9"><path d="M1 1l3.500 3.500-3.500 3.500" fill="none" stroke="#43588a" stroke-width="2.100"/></svg></div>
 </div>
 <div class="a" style="left:468px;top:576px;width:17px;height:17px;background:#f2efe2"></div>
</div>

<!-- STATUS BAR -->
<div class="a" style="left:4px;top:756px;width:1115px;height:18px;border-top:1px solid #9db4dc;background:linear-gradient(#deeafc 0%,#d2e2fa 35%,#b4cdf2 75%,#a3c0ec 100%)"></div>
<span class="a" style="left:8px;top:759px;letter-spacing:-.3px">Change Language</span>
<div class="sp" style="left:5px;width:649px"></div>
<div class="sp" style="left:656px;width:62px;padding-left:1px;letter-spacing:.1px">Python</div>
<div class="sp" style="left:720px;width:102px;padding-left:1px;letter-spacing:.05px">43 Items</div>
<div class="sp" style="left:824px;width:184px"></div>
<div class="sp" style="left:1010px;width:34px">NUM</div>
<div class="sp" style="left:1046px;width:36px;color:#8a9ab8">SCRL</div>
<div class="sp" style="left:1084px;width:30px;color:#8a9ab8">INS</div>
</div>
<!-- watermark -->
<div class="a" style="left:891px;top:744px;width:243px;height:44px;background:rgba(96,203,250,.47)"></div>
<div class="a wm" style="left:903px;top:754px;transform:scaleX(.812)">DOWNLOADS</div>
<svg class="a" style="left:1036px;top:748px" width="22" height="28" viewBox="0 0 22 28"><path d="M11 1v14" stroke="#f9d21c" stroke-width="4.200"/><path d="M2.500 8l9 11.500" stroke="#27ae60" stroke-width="4.400"/><path d="M19.500 8l-9 11.500" stroke="#2f80d8" stroke-width="4.400"/><path d="M2 24h18" stroke="#f9b21c" stroke-width="4"/></svg>
<div class="a wm" style="left:1059px;top:754px;transform:scaleX(.77)">.GURU</div>
</body></html>
